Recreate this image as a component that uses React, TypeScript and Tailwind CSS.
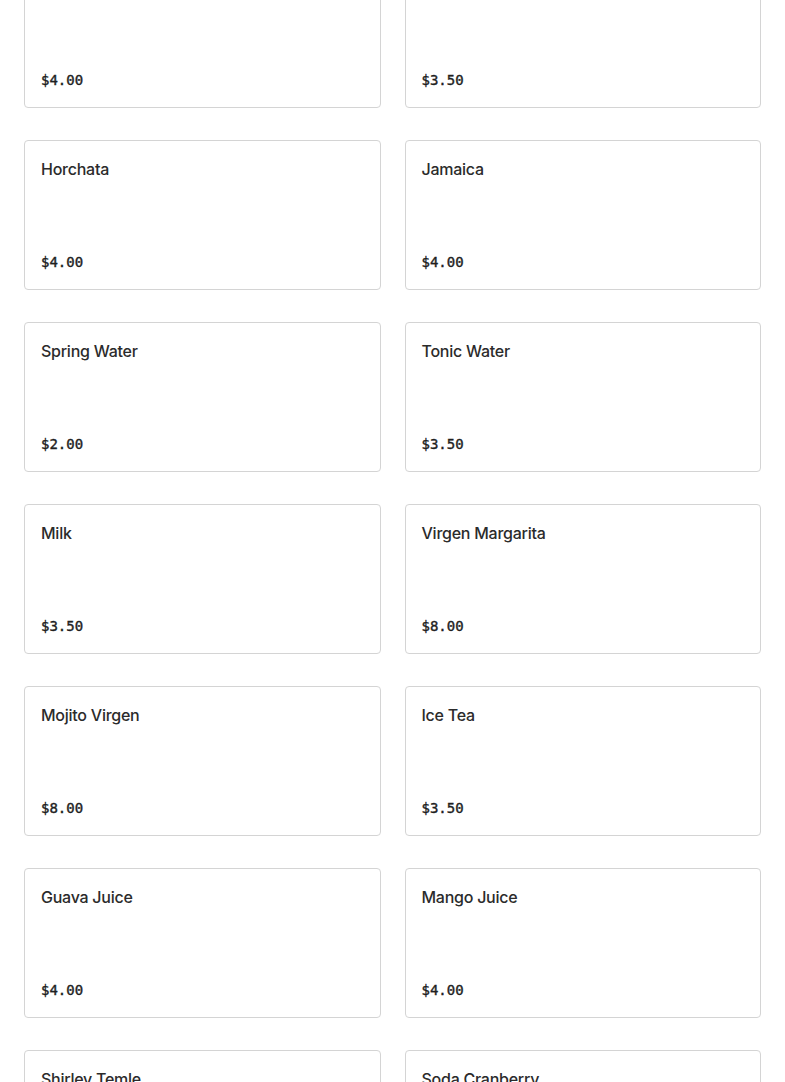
import React from "react";

const items: [string, string][] = [
  ["Agua Fresca", "$4.00"],
  ["Lemonade", "$3.50"],
  ["Horchata", "$4.00"],
  ["Jamaica", "$4.00"],
  ["Spring Water", "$2.00"],
  ["Tonic Water", "$3.50"],
  ["Milk", "$3.50"],
  ["Virgen Margarita", "$8.00"],
  ["Mojito Virgen", "$8.00"],
  ["Ice Tea", "$3.50"],
  ["Guava Juice", "$4.00"],
  ["Mango Juice", "$4.00"],
  ["Shirley Temle", "$4.00"],
  ["Soda Cranberry", "$4.00"],
];

export default function App() {
  return (
    <div className="w-full h-[1082px] overflow-hidden bg-white">
      <div className="mt-[-42px] px-6 grid grid-cols-2 gap-x-6 gap-y-8">
        {items.map(([name, price]) => (
          <div
            key={name}
            className="h-[150px] border border-[#d4d4d4] rounded-[4px] pt-4 px-4 pb-[17px] flex flex-col justify-between"
          >
            <div
              className="text-[16px] leading-6 font-medium tracking-[-0.25px] text-[#2b2b2b]"
              style={{ fontFamily: "Inter, 'Noto Sans', sans-serif" }}
            >
              {name}
            </div>
            <div
              className="text-[14px] leading-5 font-normal text-[#1f1f1f] [-webkit-text-stroke:0.4px_#1f1f1f]"
              style={{ fontFamily: "'DejaVu Sans Mono', 'Liberation Mono', monospace" }}
            >
              {price}
            </div>
          </div>
        ))}
      </div>
    </div>
  );
}
